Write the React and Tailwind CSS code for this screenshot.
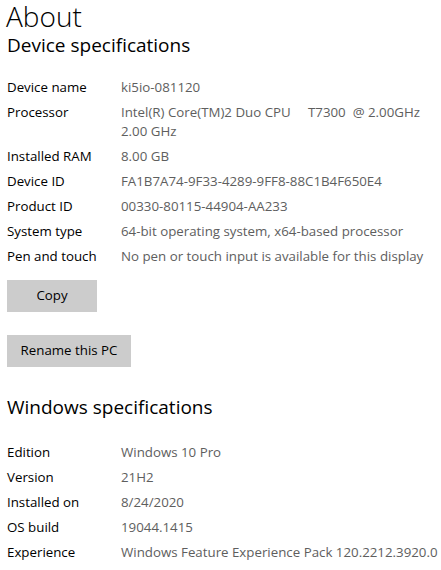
import React from "react";

const device = [
  ["Device name", "ki5io-081120"],
  ["Processor", "Intel(R) Core(TM)2 Duo CPU\u00a0\u00a0\u00a0\u00a0\u00a0T7300\u00a0\u00a0@ 2.00GHz\n2.00 GHz"],
  ["Installed RAM", "8.00 GB"],
  ["Device ID", "FA1B7A74-9F33-4289-9FF8-88C1B4F650E4"],
  ["Product ID", "00330-80115-44904-AA233"],
  ["System type", "64-bit operating system, x64-based processor"],
  ["Pen and touch", "No pen or touch input is available for this display"],
];

const windows = [
  ["Edition", "Windows 10 Pro"],
  ["Version", "21H2"],
  ["Installed on", "8/24/2020"],
  ["OS build", "19044.1415"],
  ["Experience", "Windows Feature Experience Pack 120.2212.3920.0"],
];

function SpecList({ rows }) {
  return (
    <div className="flex flex-col gap-[6px]">
      {rows.map(([label, value]) => (
        <div key={label} className="flex text-[13.3px] leading-[19px]">
          <div className="w-[114px] shrink-0 text-black">{label}</div>
          <div className="whitespace-pre text-[#5e5e5e]">{value}</div>
        </div>
      ))}
    </div>
  );
}

export default function App() {
  return (
    <div
      className="w-[441px] h-[570px] overflow-hidden bg-white pl-[7px]"
      style={{ fontFamily: '"Open Sans", "Noto Sans", sans-serif' }}
    >
      <h1 className="text-[28px] font-light leading-[32px] text-black -ml-[1px]">About</h1>
      <h2 className="text-[19px] leading-[26px] text-black">Device specifications</h2>
      <div className="mt-[20px]">
        <SpecList rows={device} />
      </div>
      <button className="mt-[14px] block w-[90px] h-[32px] bg-[#cccccc] text-[13.3px] text-black">
        Copy
      </button>
      <button className="mt-[23px] block w-[124px] h-[32px] bg-[#cccccc] text-[13.3px] text-black">
        Rename this PC
      </button>
      <h2 className="mt-[27px] text-[19px] leading-[26px] text-black">Windows specifications</h2>
      <div className="mt-[23px]">
        <SpecList rows={windows} />
      </div>
    </div>
  );
}
